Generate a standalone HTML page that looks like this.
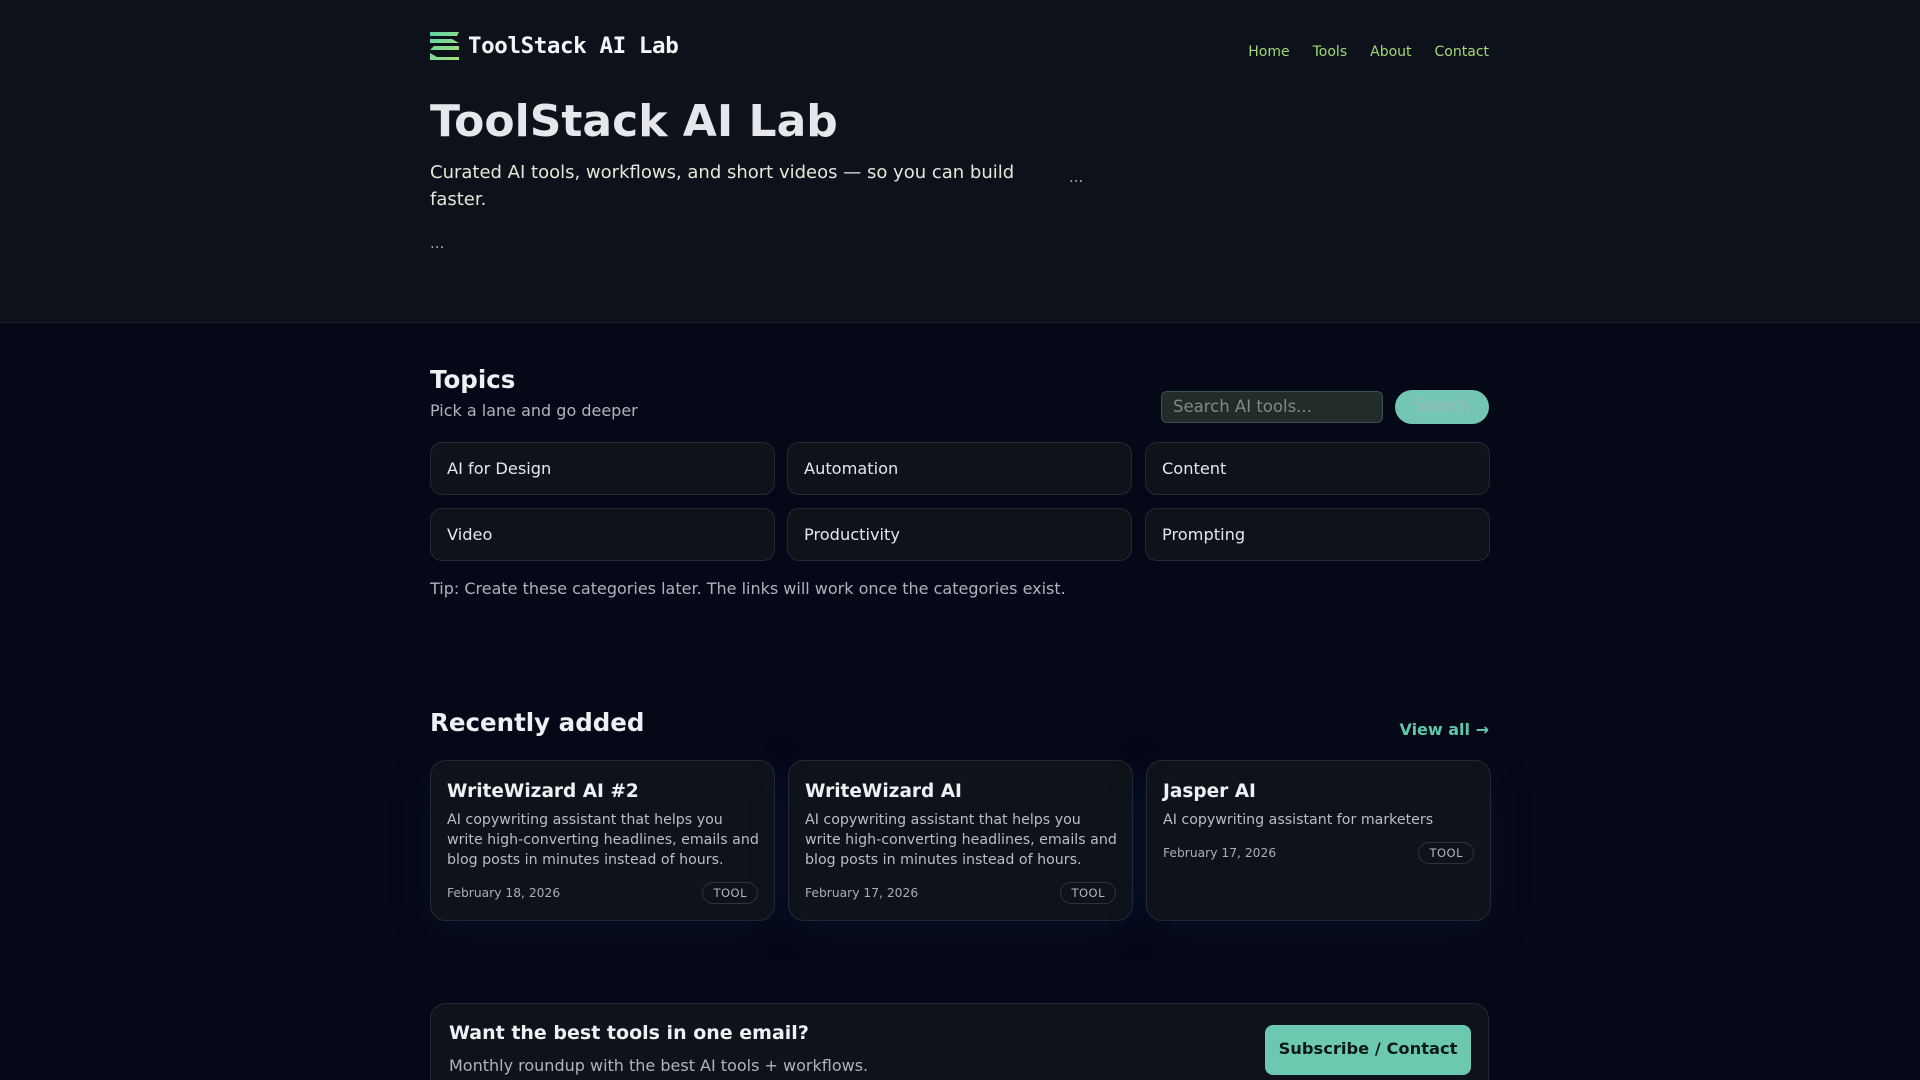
<!DOCTYPE html>
<html><head><meta charset="utf-8"><style>
*{box-sizing:border-box;margin:0;padding:0}
html,body{width:1920px;height:1080px;overflow:hidden}
body{background:#050816;font-family:"DejaVu Sans","Liberation Sans",sans-serif;color:#e5e7eb;position:relative}
.hero{position:absolute;left:0;top:0;width:1920px;height:323px;background:#0d111a;border-bottom:1px solid #1c2533}
.a{position:absolute}
.logo{left:430px;top:31px;display:flex;align-items:center}
.logo span{font-family:"DejaVu Sans Mono",monospace;font-weight:bold;font-size:22.5px;color:#f3f4f6;margin-left:9px;letter-spacing:-0.4px}
.nav a{color:#a3d977;font-size:14px;text-decoration:none;margin-left:23px}
h1{font-size:44px;font-weight:bold;color:#e5e7eb}
.sub{font-size:18px;line-height:27px;color:#e3e8da;width:620px}
.card{position:absolute;background:#0f1218;border:1px solid #222a36;border-radius:12px}
.topic{height:53px;width:345px;font-size:16.2px;color:#e5e7eb;padding:16px 16px}
.rc{width:345px;height:161px;padding:20px 16px;border-radius:16px;box-shadow:0 10px 40px rgba(20,40,90,.25)}
.rc h3{font-size:18.5px;font-weight:bold;color:#eef0f3;margin-bottom:8px}
.rc p{font-size:14.2px;line-height:20px;color:#b8bec8;white-space:nowrap}
.meta{display:flex;justify-content:space-between;align-items:center;margin-top:12px;font-size:12.3px;color:#a8aeb8}
.tag{border:1px solid #2c3440;border-radius:12px;padding:3px 10px;font-size:11.5px;letter-spacing:.5px;color:#b0b6c0}
</style></head><body>
<div class="hero"></div>
<div class="a logo"><svg width="29" height="29" viewBox="0 0 29 29"><defs><linearGradient id="g" x1="0" y1="0" x2="1" y2="1"><stop offset="0" stop-color="#5fd4a6"/><stop offset="1" stop-color="#a8e07a"/></linearGradient></defs><path fill="url(#g)" d="M0 1h29l-2 4H0zM0 8h22l7 4H0zM4 15h25v4H0zM0 22l7 4h22v3H0z"/></svg><span>ToolStack AI Lab</span></div>
<div class="a nav" style="right:431px;top:41px"><a>Home</a><a>Tools</a><a>About</a><a>Contact</a></div>
<h1 class="a" style="left:430px;top:96px">ToolStack AI Lab</h1>
<div class="a sub" style="left:430px;top:159px">Curated AI tools, workflows, and short videos — so you can build faster.</div>
<div class="a" style="left:1069px;top:168px;font-size:15px;color:#aaa">...</div>
<div class="a" style="left:430px;top:234px;font-size:15px;color:#aaa">...</div>

<div class="a" style="left:430px;top:365px;font-size:24.5px;font-weight:bold;color:#eef0f3">Topics</div>
<div class="a" style="left:430px;top:401px;font-size:16px;color:#aeb4bd">Pick a lane and go deeper</div>
<div class="a" style="left:1161px;top:391px;width:222px;height:32px;background:#222d2b;border:1px solid #3a5250;border-radius:6px;font-size:16.5px;color:#7d8a88;padding:5px 11px">Search AI tools...</div>
<div class="a" style="left:1395px;top:390px;width:94px;height:34px;background:#73c6b1;border-radius:17px;font-size:16.5px;color:#9ab8b2;text-align:center;padding-top:6px">Search</div>
<div class="card topic" style="left:430px;top:442px">AI for Design</div>
<div class="card topic" style="left:787px;top:442px">Automation</div>
<div class="card topic" style="left:1145px;top:442px">Content</div>
<div class="card topic" style="left:430px;top:508px">Video</div>
<div class="card topic" style="left:787px;top:508px">Productivity</div>
<div class="card topic" style="left:1145px;top:508px">Prompting</div>
<div class="a" style="left:430px;top:579px;font-size:16px;color:#aeb4bd">Tip: Create these categories later. The links will work once the categories exist.</div>

<div class="a" style="left:430px;top:708px;font-size:24.5px;font-weight:bold;color:#eef0f3">Recently added</div>
<div class="a" style="right:431px;top:720px;font-size:16px;font-weight:bold;color:#5fc9aa">View all →</div>
<div class="card rc" style="left:430px;top:760px"><h3>WriteWizard AI #2</h3><p>AI copywriting assistant that helps you<br>write high-converting headlines, emails and<br>blog posts in minutes instead of hours.</p><div class="meta"><span>February 18, 2026</span><span class="tag">TOOL</span></div></div>
<div class="card rc" style="left:788px;top:760px"><h3>WriteWizard AI</h3><p>AI copywriting assistant that helps you<br>write high-converting headlines, emails and<br>blog posts in minutes instead of hours.</p><div class="meta"><span>February 17, 2026</span><span class="tag">TOOL</span></div></div>
<div class="card rc" style="left:1146px;top:760px"><h3>Jasper AI</h3><p>AI copywriting assistant for marketers</p><div class="meta"><span>February 17, 2026</span><span class="tag">TOOL</span></div></div>

<div class="card" style="left:430px;top:1003px;width:1059px;height:90px;border-radius:16px"></div>
<div class="a" style="left:449px;top:1022px;font-size:19px;font-weight:bold;color:#eef0f3">Want the best tools in one email?</div>
<div class="a" style="left:449px;top:1056px;font-size:16px;color:#aeb4bd">Monthly roundup with the best AI tools + workflows.</div>
<div class="a" style="left:1265px;top:1025px;width:206px;height:50px;background:#6cc9b0;border-radius:8px;font-size:16.3px;font-weight:bold;color:#0b1a17;text-align:center;padding-top:14px">Subscribe / Contact</div>
</body></html>
